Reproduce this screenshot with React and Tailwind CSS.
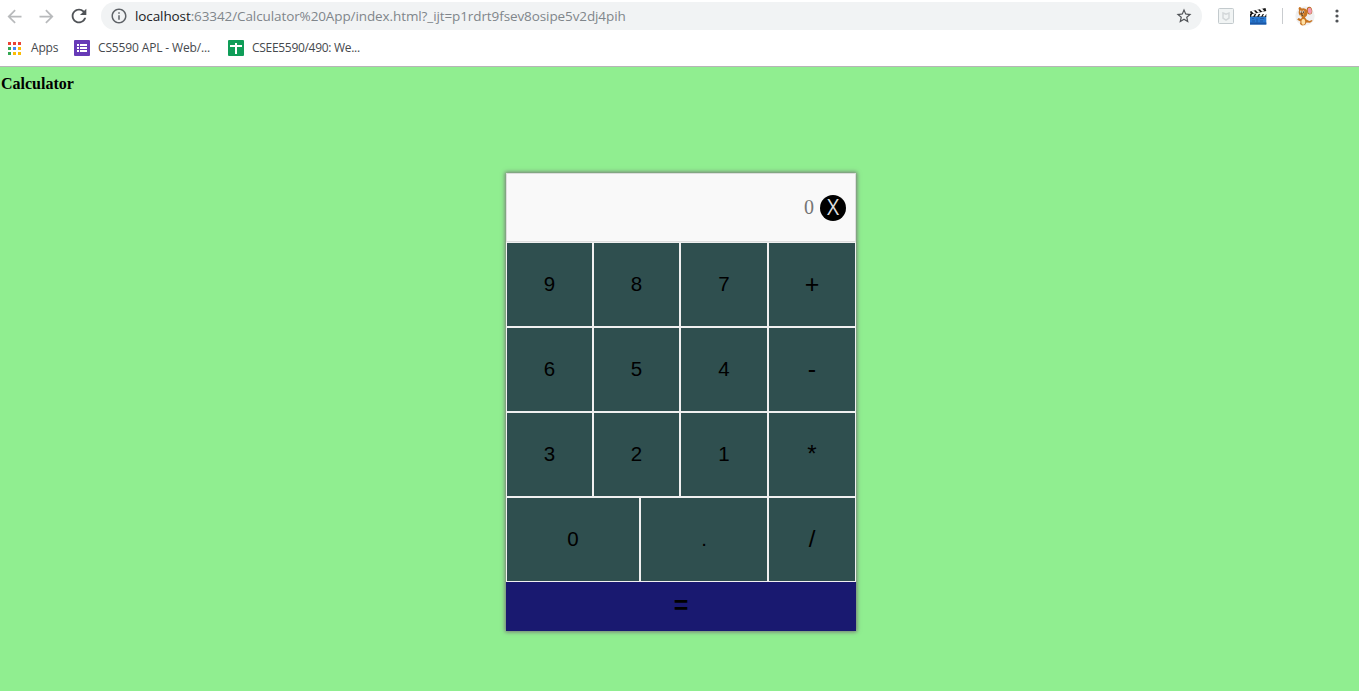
import React from "react";
import { MdArrowBack, MdArrowForward, MdRefresh, MdInfoOutline, MdStarBorder } from "react-icons/md";

const rows = [
  ["9", "8", "7", "+"],
  ["6", "5", "4", "-"],
  ["3", "2", "1", "*"],
];

function AppsIcon() {
  const colors = ["#ea4335", "#ea4335", "#ea4335", "#34a853", "#4285f4", "#fbbc05", "#34a853", "#fbbc05", "#fbbc05"];
  return (
    <svg width="13" height="13" viewBox="0 0 13 13" shapeRendering="crispEdges" className="shrink-0">
      {colors.map((c, i) => (
        <rect key={i} x={(i % 3) * 5} y={Math.floor(i / 3) * 5} width="3" height="3" fill={c} />
      ))}
    </svg>
  );
}

function FormsIcon() {
  return (
    <svg width="16" height="16" viewBox="0 0 16 16" className="shrink-0">
      <rect width="16" height="16" rx="1" fill="#673ab7" />
      <path d="M3 4h2v2H3zM6 4h7v2H6zM3 7h2v2H3zM6 7h7v2H6zM3 10h2v2H3zM6 10h7v2H6z" fill="#fff" />
    </svg>
  );
}

function SheetsIcon() {
  return (
    <svg width="16" height="16" viewBox="0 0 16 16" className="shrink-0">
      <rect width="16" height="16" rx="1" fill="#0f9d58" />
      <path d="M2 5h5V3h2v2h5v2H9v7H7V7H2z" fill="#fff" />
    </svg>
  );
}

function ShieldIcon() {
  return (
    <svg width="16" height="16" viewBox="0 0 16 16" className="shrink-0">
      <rect x=".5" y=".5" width="15" height="15" rx="1" fill="#f1f4f4" stroke="#c3cacd" />
      <path d="M5 5l3 1.2L11 5v5l-3 2-3-2z" fill="none" stroke="#d3d7d9" strokeWidth="1.5" />
    </svg>
  );
}

function ClapperIcon() {
  return (
    <svg width="17" height="17" viewBox="0 0 17 17" className="shrink-0">
      <path d="M0 3.500L15.500 0l.8 3L.8 6.500z" fill="#151515" />
      <path d="M1.500 3.200l2.500 2.600 2.200-.5L3.700 2.600zM5.700 2.200l2.400 2.500 2.200-.5L8 1.700zM9.800 1.300l2.400 2.500 2.200-.5L12.200.800z" fill="#fff" />
      <path d="M0 6h16.300v3H0z" fill="#151515" />
      <path d="M2.300 6h2.400L3.200 8.500H.9zM6.300 6h2.400L7.200 8.500H4.900zM10.300 6h2.400l-1.500 2.500H8.900zM14 6h2.200l-1.300 2.500h-2.300z" fill="#fff" />
      <path d="M0 8.800h16.300v7.700H0z" fill="#2878d0" />
      <path d="M0 14.500h16.300v2H0z" fill="#1b56a4" />
      <path d="M2 10.500h2M2 13h3M7 10.500v4M10 10.500h4M10 13h3" stroke="#1a5199" strokeWidth=".8" />
    </svg>
  );
}

function MouseAvatar() {
  return (
    <svg width="20" height="20" viewBox="0 0 20 20" className="shrink-0">
      <circle cx="10" cy="10" r="9.700" fill="#f0f0f1" />
      <ellipse cx="14.500" cy="4.700" rx="2.700" ry="3.900" transform="rotate(-8 14.500 4.700)" fill="#b9681c" />
      <ellipse cx="14.800" cy="4.900" rx="2" ry="3.100" transform="rotate(-8 14.800 4.900)" fill="#f19ab3" />
      <path d="M3.500 2.500Q4 .2 5.500 1.200L7 3 4.500 5z" fill="#c87522" />
      <path d="M3.800 5Q5 2.300 8.500 2.300q4 .5 4 4.300 0 3.500-2.600 4.600l1.500 2.300 3 1.500 2.600-1 .5 1-2.500 1.800-3.500-.3-1.500 2.500-3 .5-2-1.500.5-2.500-3.300-1.800 1.300-1.700 2.500 1L7 11Q3 9.500 3.800 5z" fill="#c87522" />
      <ellipse cx="8.300" cy="15.800" rx="1.900" ry="2.900" fill="#ffe0a4" />
      <path d="M4.500 8.500q2.500.8 4.500-.3-.5 2.300-2.500 2-1.800-.2-2-1.700z" fill="#f8d594" />
      <ellipse cx="5.800" cy="5.700" rx=".9" ry="1.300" fill="#fff" />
      <ellipse cx="8.300" cy="5.900" rx="1" ry="1.400" fill="#fff" />
      <path d="M5.700 5.200h.8v1.700h-.8zM7.900 5.300h.9v1.700h-.9zM5.800 7.500h1.700v1H5.800zM6.300 9.300h1.900v.8H6.300z" fill="#332016" />
    </svg>
  );
}

const operatorSizes = {
  "+": "text-[25px] pb-px",
  "-": "text-[25px] pb-px",
  "*": "text-[24px] pb-[2px]",
  "/": "text-[24px] pb-[2px]",
};

function Key({ children }) {
  return (
    <button className={`block h-[85px] border border-[#f0f0f0] bg-[#2f4f4f] text-center leading-none text-black ${operatorSizes[children] || "text-[20.500px] pb-px"}`}>
      {children}
    </button>
  );
}

function Toolbar() {
  return (
    <header className="h-[67px] border-b border-[#b6b4b6] bg-white font-['Open_Sans',sans-serif]">
      <div className="flex h-8 items-center">
        <div className="flex w-[101px] shrink-0 items-center gap-[11px] pl-[4px]">
          <MdArrowBack size={21} color="#b8babc" className="shrink-0" />
          <MdArrowForward size={21} color="#b8babc" className="shrink-0" />
          <MdRefresh size={22} color="#505357" className="shrink-0" />
        </div>
        <div className="flex h-7 w-[1101px] shrink-0 items-center rounded-full bg-[#f1f3f4] pl-[9px] pr-[9px]">
          <MdInfoOutline size={18} color="#5f6368" className="shrink-0" />
          <span className="ml-[7px] whitespace-nowrap text-[13.5px] leading-5 tracking-[-0.1px] text-[#80868b]">
            <span className="text-[#202124]">localhost</span>:63342/Calculator%20App/index.html?_ijt=p1rdrt9fsev8osipe5v2dj4pih
          </span>
          <MdStarBorder size={18} color="#505357" className="ml-auto shrink-0" />
        </div>
        <div className="flex items-center pl-4">
          <ShieldIcon />
          <span className="ml-4"><ClapperIcon /></span>
          <span className="ml-[15px] h-4 w-px bg-[#c9cccf]" />
          <span className="ml-[12px]"><MouseAvatar /></span>
          <svg width="4" height="14" viewBox="0 0 4 14" className="ml-[20px]" fill="#505357">
            <circle cx="2" cy="2" r="1.600" />
            <circle cx="2" cy="7" r="1.600" />
            <circle cx="2" cy="12" r="1.600" />
          </svg>
        </div>
      </div>
      <nav className="flex h-8 items-center pl-2 text-[12px] leading-4 text-[#46494d]">
        <AppsIcon />
        <span className="ml-[10px] w-[43px] whitespace-nowrap tracking-[-0.2px]">Apps</span>
        <FormsIcon />
        <span className="ml-[8px] w-[130px] whitespace-nowrap tracking-[-0.14px]">CS5590 APL - Web/...</span>
        <SheetsIcon />
        <span className="ml-[8px] whitespace-nowrap tracking-[-0.3px]">CSEE5590/490: We...</span>
      </nav>
    </header>
  );
}

export default function App() {
  return (
    <div className="h-[691px] w-[1359px] overflow-hidden bg-[#90ee90]">
      <Toolbar />
      <main>
        <h1 className="h-[106px] pl-px pt-[8px] font-['Liberation_Serif',serif] text-[16px] font-bold leading-[18px] text-black">Calculator</h1>
        <section className="ml-[506px] w-[350px] font-['Liberation_Sans',sans-serif] shadow-[0_0_4px_1px_#777]">
          <div className="flex h-[69px] items-center justify-end border border-[#dddddd] bg-[#f9f9f9] pr-[9px]">
            <span className="mb-px mr-[6px] font-['Liberation_Serif',serif] text-[20px] leading-6 text-[#757575]">0</span>
            <button className="flex h-[26px] w-[26px] items-center justify-center rounded-full bg-black pb-px font-['Open_Sans',sans-serif] text-[21px] leading-none text-[#ddd]">X</button>
          </div>
          {rows.map((row) => (
            <div key={row[0]} className="grid grid-cols-[87px_87px_88px_88px]">
              {row.map((label) => <Key key={label}>{label}</Key>)}
            </div>
          ))}
          <div className="grid grid-cols-[134px_128px_88px]">
            <Key>0</Key>
            <Key>.</Key>
            <Key>/</Key>
          </div>
          <button className="block h-[49px] w-full bg-[#191970] pb-[2px] text-center text-[25px] font-bold leading-none text-black">=</button>
        </section>
      </main>
    </div>
  );
}
